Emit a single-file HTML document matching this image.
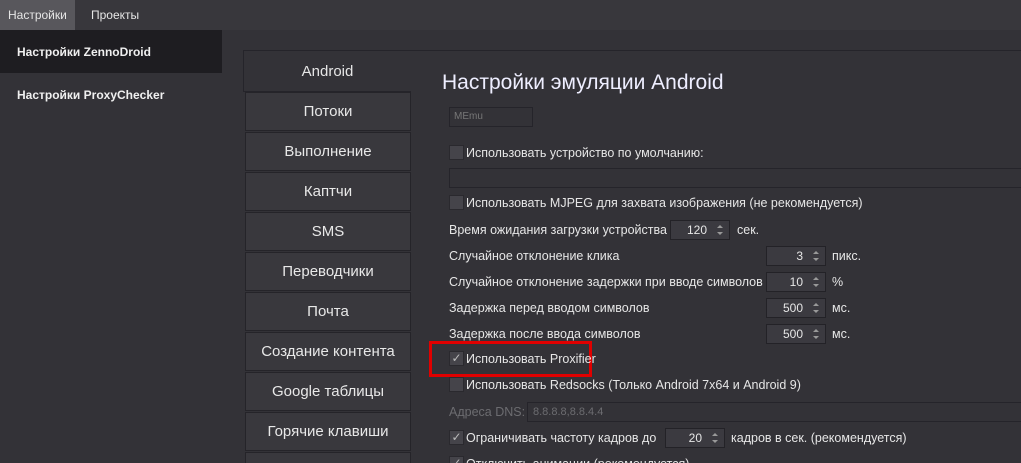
<!DOCTYPE html>
<html><head><meta charset="utf-8"><style>
*{margin:0;padding:0;box-sizing:border-box}
html,body{width:1021px;height:463px;overflow:hidden}
body{background:#333237;font-family:"Liberation Sans","DejaVu Sans",sans-serif;color:#e6e6e6;position:relative}
.a{position:absolute}
.top{left:0;top:0;width:1021px;height:30px;background:#38373c}
.tab1{left:0;top:0;width:75px;height:30px;background:#58575c;font-size:12px;line-height:30px;padding-left:8px}
.tab2{left:91px;top:0;font-size:12px;line-height:30px}
.side{left:0;top:30px;width:222px;height:433px;background:#333237}
.sel{left:0;top:30px;width:222px;height:43px;background:#1e1d21}
.si{left:17px;font-size:12px;font-weight:bold;color:#f0f0f0}
.frame{left:243px;top:50px;width:778px;height:413px;border-top:1px solid #25242a}
.tb{left:245px;width:166px;height:39px;background:#39383d;border:1px solid #252429;text-align:center;font-size:15px;line-height:38px;color:#e8e8e8}
.tba{left:243px;top:50px;width:168px;height:42px;background:#333237;border:1px solid #25242a;border-right:none;text-align:center;font-size:15px;line-height:42px}
.t{font-size:12.5px;color:#e6e6e6;white-space:nowrap}
.cb{width:15px;height:15px;background:#45444a;border:1px solid #2a292e}
.ck{color:#bbb;font-size:12px;line-height:13px;text-align:center}
.sp{height:20px;background:#3b3a40;border:1px solid #232227;font-size:12px;line-height:18px;text-align:right;padding-right:22px;color:#e6e6e6}
.sp:before{content:"";position:absolute;right:6px;top:4px;border:3px solid transparent;border-bottom:3px solid #999;border-top:none}
.sp:after{content:"";position:absolute;right:6px;bottom:4px;border:3px solid transparent;border-top:3px solid #999;border-bottom:none}
.clip{left:0;top:452px;width:1021px;height:11px;overflow:hidden}
</style></head><body>
<div class="a top"></div>
<div class="a tab1">Настройки</div>
<div class="a tab2">Проекты</div>
<div class="a side"></div>
<div class="a sel"></div>
<div class="a si" style="top:45px">Настройки ZennoDroid</div>
<div class="a si" style="top:88px">Настройки ProxyChecker</div>
<div class="a frame"></div>
<div class="a tba">Android</div>
<div class="a tb" style="top:92px">Потоки</div>
<div class="a tb" style="top:132px">Выполнение</div>
<div class="a tb" style="top:172px">Каптчи</div>
<div class="a tb" style="top:212px">SMS</div>
<div class="a tb" style="top:252px">Переводчики</div>
<div class="a tb" style="top:292px">Почта</div>
<div class="a tb" style="top:332px">Создание контента</div>
<div class="a tb" style="top:372px">Google таблицы</div>
<div class="a tb" style="top:412px">Горячие клавиши</div>

<div class="a" style="left:442px;top:71px;font-size:21px;color:#eef">Настройки эмуляции Android</div>
<div class="a" style="left:449px;top:107px;width:84px;height:20px;border:1px solid #25242a;font-size:10px;color:#777;line-height:18px;padding-left:4px">MEmu</div>
<div class="a cb" style="left:449px;top:145px"></div><div class="a t" style="left:466px;top:146px">Использовать устройство по умолчанию:</div>
<div class="a" style="left:449px;top:168px;width:572px;height:20px;border:1px solid #25242a;border-right:none"></div>
<div class="a cb" style="left:449px;top:195px"></div><div class="a t" style="left:466px;top:196px">Использовать MJPEG для захвата изображения (не рекомендуется)</div>
<div class="a t" style="left:449px;top:223px">Время ожидания загрузки устройства</div>
<div class="a sp" style="left:670px;top:220px;width:60px">120</div><div class="a t" style="left:737px;top:223px">сек.</div>
<div class="a t" style="left:449px;top:249px">Случайное отклонение клика</div>
<div class="a sp" style="left:766px;top:246px;width:60px">3</div><div class="a t" style="left:832px;top:249px">пикс.</div>
<div class="a t" style="left:449px;top:275px">Случайное отклонение задержки при вводе символов</div>
<div class="a sp" style="left:766px;top:272px;width:60px">10</div><div class="a t" style="left:832px;top:275px">%</div>
<div class="a t" style="left:449px;top:301px">Задержка перед вводом символов</div>
<div class="a sp" style="left:766px;top:298px;width:60px">500</div><div class="a t" style="left:832px;top:301px">мс.</div>
<div class="a t" style="left:449px;top:327px">Задержка после ввода символов</div>
<div class="a sp" style="left:766px;top:324px;width:60px">500</div><div class="a t" style="left:832px;top:327px">мс.</div>
<div class="a" style="left:429px;top:341px;width:163px;height:36px;border:3px solid #e00000"></div>
<div class="a cb ck" style="left:449px;top:351px">✓</div><div class="a t" style="left:466px;top:352px">Использовать Proxifier</div>
<div class="a cb" style="left:449px;top:377px"></div><div class="a t" style="left:466px;top:378px">Использовать Redsocks (Только Android 7x64 и Android 9)</div>
<div class="a t" style="left:449px;top:405px;color:#6c6c70">Адреса DNS:</div>
<div class="a" style="left:527px;top:402px;width:494px;height:20px;border:1px solid #25242a;border-right:none;font-size:11px;color:#6c6c70;line-height:18px;padding-left:5px">8.8.8.8,8.8.4.4</div>
<div class="a cb ck" style="left:449px;top:430px">✓</div><div class="a t" style="left:466px;top:431px">Ограничивать частоту кадров до</div>
<div class="a sp" style="left:665px;top:428px;width:60px">20</div><div class="a t" style="left:731px;top:431px">кадров в сек. (рекомендуется)</div>
<div class="a clip">
<div class="a" style="left:245px;top:0;width:166px;height:20px;background:#39383d;border:1px solid #252429"></div>
<div class="a cb ck" style="left:449px;top:4px">✓</div><div class="a t" style="left:466px;top:5px">Отключить анимации (рекомендуется)</div>
</div>
</body></html>
